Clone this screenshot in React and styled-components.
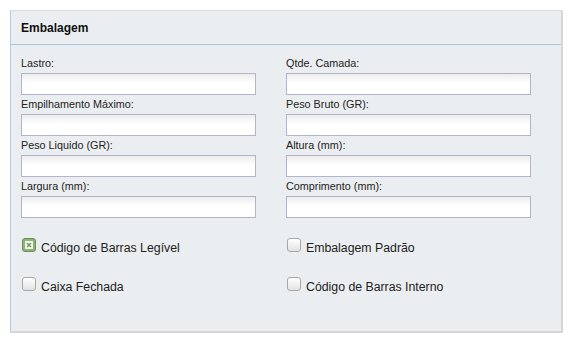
import React from 'react';
import styled, { createGlobalStyle } from 'styled-components';

const Global = createGlobalStyle`
    body {
        margin: 0;
        background: #ffffff;
        font-family: "Liberation Sans", Arial, sans-serif;
        color: #222;
    }
`;

const Page = styled.div`
    padding: 10px 11px 11px 10px;
`;

const Panel = styled.fieldset`
    margin: 0;
    padding: 0;
    height: 323px;
    box-sizing: border-box;

    background-color: #ebeef0;
    border-style: solid;
    border-width: 1px 2px 2px 1px;
    border-color: #d9dcde #d6d6d6 #d6d6d6 #b3cbe8;
`;

const Panel__Header = styled.div`
    height: 33px;
    padding-left: 10px;

    display: flex;
    align-items: center;

    font-size: 12px;
    font-weight: bold;
    color: #111;

    border-bottom: 1px solid #a6c6ea;
`;

const Panel__Body = styled.div`
    padding: 9px 10px 0 10px;
`;

const Grid = styled.div`
    display: grid;
    grid-template-columns: 265px 265px;
`;

const Field = styled.div`
    display: flex;
    flex-direction: column;
`;

const Label = styled.label`
    height: 19px;
    line-height: 18px;
    font-size: 10.8px;
    color: #222;
`;

const Input = styled.input`
    box-sizing: border-box;
    width: ${props => props.wide ? '245px' : '235px'};
    height: 22px;
    margin: 0;

    border: 1px solid #b2b4cc;
    background: linear-gradient(#ececec 0px, #ffffff 9px, #ffffff 100%);
`;

const Checks = styled.div`
    margin-top: 17px;

    display: grid;
    grid-template-columns: 265px 265px;
    row-gap: 14px;
`;

const Check = styled.label`
    height: 25px;

    display: flex;
    align-items: center;
    gap: 5px;

    font-size: 12.3px;
    color: #222;
`;

const Box = styled.span`
    box-sizing: border-box;
    width: 14px;
    height: 14px;
    margin-left: 1px;
    margin-top: -5px;

    display: flex;
    justify-content: center;
    align-items: center;

    border-radius: 3px;
    border: 1px solid ${props => props.checked ? '#6c8f58' : '#a8a8a8'};
    background: ${props => props.checked
        ? '#8db478'
        : 'linear-gradient(#ffffff, #e2e2e2)'};
`;

const Mark = styled.span`
    width: 8px;
    height: 8px;

    display: flex;

    background-color: #f4f7f0;

    & svg {
        display: block;
    }
`;

const left = [
    'Lastro:',
    'Empilhamento Máximo:',
    'Peso Liquido (GR):',
    'Largura (mm):',
];

const right = [
    'Qtde. Camada:',
    'Peso Bruto (GR):',
    'Altura (mm):',
    'Comprimento (mm):',
];

function CheckItem({ text, checked }) {
    return (
        <Check>
            <Box checked={checked}>
                {checked &&
                    <Mark>
                        <svg width="8" height="8" viewBox="0 0 8 8">
                            <path d="M2 2 L6 6 M6 2 L2 6" stroke="#6f9a5a" strokeWidth="1.5" />
                        </svg>
                    </Mark>
                }
            </Box>
            {text}
        </Check>
    );
}

export default function App() {
    return (
        <Page>
            <Global />
            <Panel>
                <Panel__Header>Embalagem</Panel__Header>
                <Panel__Body>
                    <Grid>
                        {left.map((l, i) => (
                            <React.Fragment key={l}>
                                <Field>
                                    <Label>{l}</Label>
                                    <Input type="text" />
                                </Field>
                                <Field>
                                    <Label>{right[i]}</Label>
                                    <Input type="text" wide />
                                </Field>
                            </React.Fragment>
                        ))}
                    </Grid>
                    <Checks>
                        <CheckItem text="Código de Barras Legível" checked />
                        <CheckItem text="Embalagem Padrão" />
                        <CheckItem text="Caixa Fechada" />
                        <CheckItem text="Código de Barras Interno" />
                    </Checks>
                </Panel__Body>
            </Panel>
        </Page>
    );
}
